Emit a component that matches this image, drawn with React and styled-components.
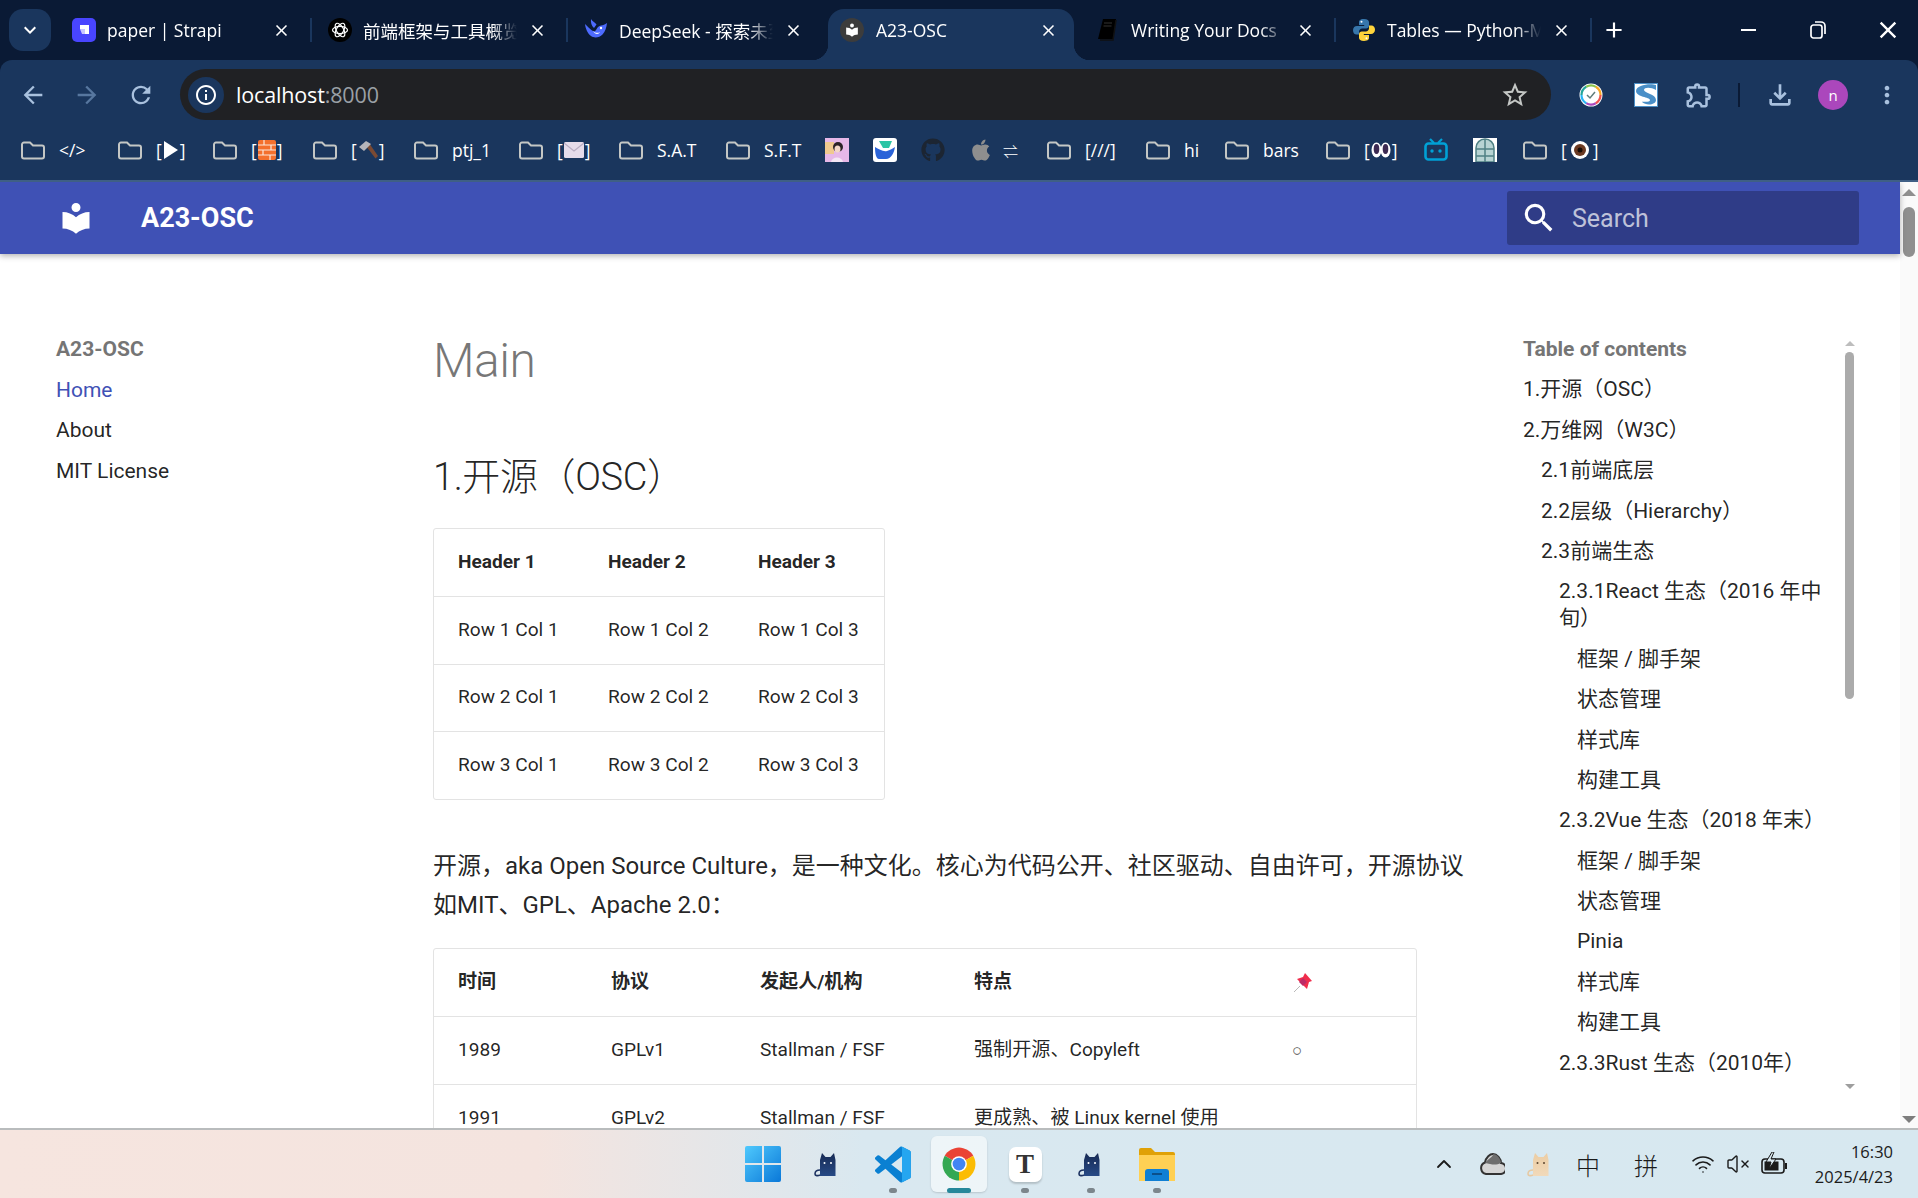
import React from 'react';
import styled, { createGlobalStyle } from 'styled-components';
import {
  MdArrowBack,
  MdArrowForward,
  MdRefresh,
  MdInfoOutline,
  MdStarBorder,
  MdOutlineExtension,
  MdOutlineFileDownload,
  MdMoreVert,
  MdClose,
  MdAdd,
  MdKeyboardArrowDown,
  MdSearch,
} from 'react-icons/md';
import { FaGithub, FaApple } from 'react-icons/fa';
import { ChevronUp, Wifi, VolumeX } from 'lucide-react';

const GlobalStyle = createGlobalStyle`
  html, body {
    margin: 0;
    width: 1918px;
    height: 1198px;
    overflow: hidden;
    background: #fff;
  }
`;

/* ---------- browser chrome ---------- */

const Shell = styled.div`
  width: 1918px;
  height: 1198px;
  display: flex;
  flex-direction: column;
  font-family: Roboto, 'Noto Sans CJK SC', sans-serif;
`;

const Chrome = styled.header`
  flex: none;
  background: #0a1a35;
  font-family: 'Open Sans', 'Noto Sans CJK SC', sans-serif;
  color: #fff;
`;

const TabStrip = styled.div`
  height: 60px;
  display: flex;
  align-items: flex-start;
  padding: 9px 0 0 9px;
  box-sizing: border-box;
`;

const CollapseButton = styled.div`
  width: 42px;
  height: 42px;
  margin-right: 5px;
  border-radius: 14px;
  background: #1a365d;
  display: flex;
  align-items: center;
  justify-content: center;
  font-size: 24px;
`;

const Tab = styled.div`
  position: relative;
  flex: none;
  box-sizing: border-box;
  width: ${(p) => p.$width || 254}px;
  height: ${(p) => (p.$active ? 51 : 42)}px;
  margin: 0 ${(p) => (p.$active ? 4 : 0)}px;
  padding: ${(p) => (p.$active ? '0 16px 9px 12px' : '0 19px 0 16px')};
  display: flex;
  align-items: center;
  gap: ${(p) => (p.$active ? 12 : 11)}px;
  font-size: 17.5px;
  background: ${(p) => (p.$active ? '#1a365d' : 'transparent')};
  border-radius: 16px 16px 0 0;

  ${(p) =>
    p.$active &&
    `
    &::before, &::after {
      content: '';
      position: absolute;
      bottom: 0;
      width: 16px;
      height: 16px;
    }
    &::before {
      left: -16px;
      background: radial-gradient(circle at 0 0, transparent 16px, #1a365d 16.5px);
    }
    &::after {
      right: -16px;
      background: radial-gradient(circle at 100% 0, transparent 16px, #1a365d 16.5px);
    }
  `}
`;

const TabTitle = styled.span`
  flex: 1;
  white-space: nowrap;
  overflow: hidden;
  mask-image: linear-gradient(to right, #000 84%, transparent 100%);
`;

const TabClose = styled.span`
  display: flex;
  font-size: 19px;
`;

const TabSeparator = styled.div`
  flex: none;
  width: 2px;
  height: 24px;
  margin-top: 9px;
  background: ${(p) => (p.$hidden ? 'transparent' : '#1a365d')};
`;

const NewTab = styled.div`
  width: 43px;
  height: 42px;
  display: flex;
  align-items: center;
  justify-content: center;
  font-size: 26px;
`;

const WindowButtons = styled.div`
  margin-left: auto;
  height: 42px;
  display: flex;
  align-items: center;
`;

const WindowButton = styled.div`
  width: ${(p) => p.$width}px;
  height: 42px;
  display: flex;
  align-items: center;
  justify-content: center;
  font-size: 28px;
`;

const Toolbar = styled.div`
  height: 60px;
  background: #1a365d;
  border-radius: 12px 12px 0 0;
  display: flex;
  align-items: flex-start;
  padding-top: 9px;
  box-sizing: border-box;
`;

const NavButton = styled.div`
  width: 54px;
  height: 51px;
  display: flex;
  align-items: center;
  justify-content: center;
  font-size: 28px;
  color: ${(p) => (p.$dim ? '#57779f' : '#a9c1de')};
`;

const NavGroup = styled.div`
  display: flex;
  padding-left: 6px;
  width: 180px;
  flex: none;
  box-sizing: border-box;
`;

const Omnibox = styled.div`
  width: 1371px;
  height: 51px;
  flex: none;
  background: #202124;
  border-radius: 26px;
  display: flex;
  align-items: center;
  padding-left: 8px;
  padding-right: 21px;
  box-sizing: border-box;
`;

const InfoBadge = styled.div`
  width: 36px;
  height: 36px;
  border-radius: 50%;
  background: #1a365d;
  display: flex;
  align-items: center;
  justify-content: center;
  font-size: 24px;
`;

const UrlHost = styled.span`
  margin-left: 12px;
  font-size: 21.5px;
  letter-spacing: -0.15px;
`;

const UrlPort = styled.span`
  color: #9aa0a6;
`;

const StarIcon = styled.div`
  margin-left: auto;
  display: flex;
  font-size: 30px;
  color: #c4c7c5;
`;

const ToolbarActions = styled.div`
  flex: 1;
  height: 51px;
  display: flex;
  align-items: center;
`;

const ActionSlot = styled.div`
  flex: none;
  width: ${(p) => p.$width}px;
  display: flex;
  align-items: center;
  justify-content: center;
  font-size: ${(p) => p.$size || 28}px;
  color: #a9c1de;
`;

const ToolbarDivider = styled.div`
  width: 2px;
  height: 24px;
  background: #0a1a35;
`;

const Avatar = styled.div`
  flex: none;
  width: 30px;
  height: 30px;
  border-radius: 50%;
  background: #ab47bc;
  color: #fff;
  font-size: 15px;
  display: flex;
  align-items: center;
  justify-content: center;
`;

const BookmarkBar = styled.div`
  height: 60px;
  background: #1a365d;
  border-bottom: 2px solid #3f5f85;
  display: flex;
  align-items: center;
  padding-left: 21px;
`;

const Bookmark = styled.div`
  flex: none;
  width: ${(p) => p.$width}px;
  display: flex;
  align-items: center;
  gap: ${(p) => p.$gap ?? 14}px;
  font-size: 17.5px;
  white-space: nowrap;
`;

const BracketLabel = styled.span`
  display: flex;
  align-items: center;
  gap: 1px;
`;

const AppleMark = styled(FaApple)`
  margin-left: -3px;
`;

const SwapArrows = styled.span`
  font-size: 15px;
  font-weight: 300;
`;

/* ---------- docs page ---------- */

const Viewport = styled.div`
  flex: 1;
  min-height: 0;
  display: flex;
  overflow: hidden;
`;

const Page = styled.div`
  flex: 1;
  min-width: 0;
  display: flex;
  flex-direction: column;
  background: #fff;
`;

const SiteHeader = styled.div`
  flex: none;
  position: relative;
  z-index: 1;
  height: 72px;
  background: #3f51b5;
  box-shadow: 0 2px 6px rgba(0, 0, 0, 0.3);
  display: flex;
  align-items: center;
  color: #fff;
  padding-left: 58px;
`;

const SiteTitle = styled.div`
  margin-left: 47px;
  font-size: 27px;
  font-weight: 700;
`;

const SearchBox = styled.div`
  margin-left: auto;
  margin-right: 41px;
  width: 352px;
  height: 54px;
  border-radius: 3px;
  background: #2f3c87;
  display: flex;
  align-items: center;
  padding-left: 13px;
  box-sizing: border-box;
  font-size: 25px;
  color: rgba(255, 255, 255, 0.7);
  gap: 14px;
`;

const SearchGlyph = styled.span`
  display: flex;
  font-size: 38px;
  color: #fff;
`;

const Columns = styled.div`
  flex: 1;
  min-height: 0;
  display: grid;
  grid-template-columns: 433px 1090px 1fr;
`;

const Sidebar = styled.nav`
  padding: 82px 0 0 56px;
  font-size: 21px;
`;

const NavTitle = styled.div`
  line-height: 27px;
  font-weight: 700;
  color: #757575;
`;

const NavLink = styled.div`
  line-height: 27px;
  margin-top: 13.5px;
  color: ${(p) => (p.$current ? '#3f51b5' : 'rgba(0, 0, 0, 0.87)')};
`;

const Article = styled.main`
  padding: 78px 45px 0 0;
  color: rgba(0, 0, 0, 0.87);
`;

const PageTitle = styled.h1`
  margin: 0;
  font-size: 48px;
  line-height: 58px;
  font-weight: 300;
  color: rgba(0, 0, 0, 0.54);
  letter-spacing: -0.5px;
`;

const SectionTitle = styled.h2`
  margin: 62px 0 26px;
  font-size: 38px;
  line-height: 50px;
  font-weight: 300;
  letter-spacing: -0.4px;
`;

const Prose = styled.p`
  margin: 47px 0 23px;
  font-size: 24px;
  line-height: 39.2px;
`;

const TableFrame = styled.div`
  width: fit-content;
  border: 1px solid #e3e3e3;
  border-radius: 3px;
  overflow: hidden;
`;

const DataTable = styled.table`
  border-collapse: collapse;
  table-layout: fixed;
  font-size: 19.1px;
  line-height: 24px;
`;

const Cell = styled.td`
  box-sizing: border-box;
  padding: 0 0 1px 24px;
  height: 67.5px;
  border-top: 1px solid #e3e3e3;
  text-align: left;
`;

const HeadCell = styled(Cell).attrs({ as: 'th' })`
  padding-bottom: 2px;
  font-weight: 700;
  border-top: 0;
`;

const Col = styled.col`
  width: ${(p) => p.$width}px;
`;

const Bullet = styled.span`
  margin-left: -3px;
  font-family: 'Liberation Sans', sans-serif;
  font-size: 17px;
  color: #555;
`;

const PinWrap = styled.span`
  display: inline-flex;
  vertical-align: middle;
  margin-left: -2px;
`;

const Toc = styled.aside`
  padding-top: 82px;
  display: flex;
  align-items: flex-start;
  font-size: 21px;
`;

const TocBody = styled.div`
  width: 303px;
  flex: none;
`;

const TocItem = styled.div`
  line-height: 27px;
  margin-top: 13.4px;
  padding-left: ${(p) => p.$level * 18}px;
  color: rgba(0, 0, 0, 0.87);
`;

const TocTrack = styled.div`
  margin-left: 19px;
  width: 9px;
  height: 748px;
  padding-top: 5px;
  display: flex;
  flex-direction: column;
  align-items: center;
`;

const TocThumb = styled.div`
  margin-top: 6px;
  width: 9px;
  height: 347px;
  border-radius: 5px;
  background: #ababab;
`;

const Arrow = styled.div`
  width: 0;
  height: 0;
  border-left: ${(p) => p.$size}px solid transparent;
  border-right: ${(p) => p.$size}px solid transparent;
  ${(p) => (p.$down ? 'border-top' : 'border-bottom')}: ${(p) => p.$size}px solid ${(p) => p.$color};
  margin-top: ${(p) => (p.$down ? 'auto' : '0')};
`;

const PageScrollbar = styled.div`
  flex: none;
  width: 18px;
  background: #fafafa;
  box-sizing: border-box;
  padding: 7px 0 5px;
  display: flex;
  flex-direction: column;
  align-items: center;
`;

const PageThumb = styled.div`
  margin-top: 11px;
  width: 12px;
  height: 50px;
  border-radius: 6px;
  background: #8f8f8f;
`;

/* ---------- taskbar ---------- */

const Taskbar = styled.footer`
  flex: none;
  height: 70px;
  box-sizing: border-box;
  border-top: 2px solid #b9bcbd;
  background: linear-gradient(90deg, #f6e5df 0%, #f4e4df 28%, #d9e8f0 45%, #d7e8f0 100%);
  display: flex;
  align-items: stretch;
  padding-left: 731px;
  font-family: 'Open Sans', 'Noto Sans CJK SC', sans-serif;
  color: #1b1b1b;
`;

const Launcher = styled.div`
  display: flex;
`;

const LauncherSlot = styled.div`
  position: relative;
  width: ${(p) => p.$width || 66}px;
  display: flex;
  align-items: center;
  justify-content: center;
  box-sizing: border-box;

  ${(p) =>
    p.$open &&
    `
    &::after {
      content: '';
      position: absolute;
      bottom: 5px;
      left: 50%;
      margin-left: -${p.$focused ? 12 : 4}px;
      width: ${p.$focused ? 24 : 8}px;
      height: 5px;
      border-radius: 3px;
      background: ${p.$focused ? '#25879a' : '#7c868c'};
    }
  `}
`;

const FocusPlate = styled.div`
  width: 56px;
  height: 56px;
  border-radius: 6px;
  background: rgba(255, 255, 255, 0.55);
  box-shadow: 0 1px 2px rgba(0, 0, 0, 0.15);
  display: flex;
  align-items: center;
  justify-content: center;
`;

const TyporaIcon = styled.div`
  width: 33px;
  height: 35px;
  border-radius: 7px;
  background: #fff;
  box-shadow: 0 2px 2px rgba(0, 0, 0, 0.18);
  display: flex;
  align-items: center;
  justify-content: center;
  font-family: 'Liberation Serif', serif;
  font-weight: 700;
  font-size: 27px;
  color: #333;
`;

const Tray = styled.div`
  margin-left: auto;
  margin-right: 25px;
  display: flex;
  align-items: center;
`;

const TraySlot = styled.div`
  width: ${(p) => p.$width}px;
  display: flex;
  align-items: center;
  justify-content: center;
  font-size: 24px;
  font-family: 'Noto Sans CJK SC', sans-serif;
  font-weight: 300;
`;

const Clock = styled.div`
  width: 95px;
  text-align: right;
  font-size: 16.5px;
  line-height: 25px;
`;

/* ---------- small drawings ---------- */

const Icon = ({ w = 24, h = 24, vb, children }) => (
  <svg width={w} height={h} viewBox={vb || `0 0 ${w} ${h}`}>
    {children}
  </svg>
);

const FolderIcon = () => (
  <Icon w={24} h={19}>
    <path
      d="M3 1.5h6l3 3h9a2 2 0 0 1 2 2v9a2 2 0 0 1-2 2H3a2 2 0 0 1-2-2v-12a2 2 0 0 1 2-2z"
      fill="none"
      stroke="#c4c7c5"
      strokeWidth="2"
    />
  </Icon>
);

const LIBRARY =
  'M12 8a3 3 0 0 0 3-3 3 3 0 0 0-3-3 3 3 0 0 0-3 3 3 3 0 0 0 3 3m0 3.54C9.64 9.35 6.5 8 3 8v11c3.5 0 6.64 1.35 9 3.54 2.36-2.19 5.5-3.54 9-3.54V8c-3.5 0-6.64 1.35-9 3.54Z';

const StrapiFav = () => (
  <Icon>
    <rect width="24" height="24" rx="5" fill="#4945ff" />
    <path d="M8 7h9v9h-4v-5H8z" fill="#fff" />
    <path d="M8 11h5v5H10z" fill="#c8c6ff" />
  </Icon>
);

const ChatFav = () => (
  <Icon>
    <circle cx="12" cy="12" r="12" fill="#000" />
    <g fill="none" stroke="#fff" strokeWidth="1.2">
      <ellipse cx="12" cy="12" rx="7.5" ry="3.6" />
      <ellipse cx="12" cy="12" rx="7.5" ry="3.6" transform="rotate(60 12 12)" />
      <ellipse cx="12" cy="12" rx="7.5" ry="3.6" transform="rotate(120 12 12)" />
    </g>
  </Icon>
);

const DeepSeekFav = () => (
  <Icon>
    <path
      d="M1 6c2.500 2.500 4.500 4.800 7 6.500 2 1.300 3.500.8 4.500-1.300C13.500 9 15 7.800 17 7.500c2-.3 4-.8 6-2.500-.6 4.500-1.500 8.500-4.500 11.500-3 3-8 4-11.500 1.500C3.500 15.500 1.500 10.500 1 6z"
      fill="#4d6bfe"
    />
    <path d="M7 1c1 2.500 4 3 5.500 5.500L10 10C7.500 8 6.500 4.500 7 1z" fill="#4d6bfe" />
    <path d="M9 13c2 2 5 2.500 7 1-1 2.500-5 3-7-1z" fill="#fff" />
    <circle cx="17" cy="10" r="1.200" fill="#fff" />
  </Icon>
);

const OscFav = () => (
  <Icon>
    <circle cx="12" cy="12" r="12" fill="#3c3c3c" />
    <g transform="translate(4.200 4.200) scale(.65)">
      <path d={LIBRARY} fill="#fff" />
    </g>
  </Icon>
);

const BookFav = () => (
  <Icon>
    <path d="M7 1h13l-3 20H2z" fill="#000" />
    <path d="M8 5h8M7.500 8h8" stroke="#333" strokeWidth="1" />
    <path d="M4 22h13l3-20" fill="none" stroke="#111" strokeWidth="1.500" />
  </Icon>
);

const PYTHON_HALF =
  'M12 1c-4.500 0-5 2-5 3.200V7h5.200v1H5c-2.200 0-4 1.500-4 4.200s1.500 4.300 3.500 4.300H7v-2.800c0-1.800 1.500-3.200 3.200-3.200h4c1.500 0 2.800-1.200 2.800-2.800V4.200C17 2.500 15.500 1 12 1z';

const PythonFav = () => (
  <Icon>
    <path d={PYTHON_HALF} fill="#3776ab" />
    <path d={PYTHON_HALF} fill="#ffd43b" transform="rotate(180 12 12)" />
    <circle cx="9.500" cy="3.800" r="1" fill="#fff" />
    <circle cx="14.500" cy="20.200" r="1" fill="#fff" />
  </Icon>
);

const PlayGlyph = () => (
  <Icon w={16} h={20}>
    <path d="M1 1l14 9-14 9z" fill="#fff" />
  </Icon>
);

const BrickGlyph = () => (
  <Icon w={18} h={20}>
    <rect width="18" height="20" rx="2" fill="#f4702d" />
    <path d="M0 5h18M0 10h18M0 15h18M6 0v5M13 5v5M5 10v5M12 15v5" stroke="#fbe6da" strokeWidth="1.200" />
  </Icon>
);

const HammerGlyph = () => (
  <Icon w={20} h={20}>
    <path d="M8 6l3-3 9 13-2.500 2.500z" fill="#7a4a33" />
    <path d="M1 7l7-6 5 3-7 7z" fill="#b5b5ba" />
  </Icon>
);

const MailGlyph = () => (
  <Icon w={20} h={16}>
    <rect width="20" height="16" rx="1.500" fill="#e6dcea" />
    <path d="M0 1l10 8 10-8" fill="none" stroke="#b9adc2" strokeWidth="1.200" />
  </Icon>
);

const EyesGlyph = () => (
  <Icon w={20} h={20}>
    <ellipse cx="5.500" cy="10" rx="5" ry="7.500" fill="#fff" />
    <ellipse cx="14.500" cy="10" rx="5" ry="7.500" fill="#fff" />
    <ellipse cx="5.500" cy="9" rx="2.800" ry="5" fill="#3d2a52" />
    <ellipse cx="14.500" cy="9" rx="2.800" ry="5" fill="#3d2a52" />
  </Icon>
);

const EyeGlyph = () => (
  <Icon>
    <circle cx="12" cy="12" r="9" fill="#fff" />
    <circle cx="12" cy="12" r="6" fill="#6b3a22" />
    <circle cx="12" cy="12" r="2.500" fill="#1a0d06" />
  </Icon>
);

const PortraitFav = () => (
  <Icon>
    <rect width="24" height="24" fill="#e6b8e8" />
    <rect width="9" height="12" y="4" fill="#efc98f" />
    <path d="M6 24c1-6 11-6 12 0z" fill="#f4e6f5" />
    <circle cx="13" cy="9" r="5" fill="#2b2226" />
    <ellipse cx="12.500" cy="11" rx="3" ry="3.500" fill="#f3d7c8" />
  </Icon>
);

const WingFav = () => (
  <Icon>
    <rect width="24" height="24" rx="3" fill="#fff" />
    <path d="M6 3h13l-3 7h-6z" fill="#2cc5a5" />
    <path d="M2 9c4 2 8 5 12 4s6-3 8-4c-1 6-4 12-9 12H6C3 21 2 15 2 9z" fill="#2a63d8" />
  </Icon>
);

const BiliFav = () => (
  <Icon>
    <path d="M6 1l4 4M18 1l-4 4" stroke="#00a1d6" strokeWidth="2.200" />
    <rect x="1.500" y="5.500" width="21" height="16" rx="3" fill="none" stroke="#00a1d6" strokeWidth="2.600" />
    <circle cx="8" cy="13" r="1.700" fill="#00a1d6" />
    <circle cx="16" cy="13" r="1.700" fill="#00a1d6" />
  </Icon>
);

const WindowFav = () => (
  <Icon>
    <rect width="24" height="24" fill="#fff" />
    <path d="M3 24V10a9 9 0 0 1 18 0v14z" fill="#b7d3d3" stroke="#4f8084" strokeWidth="1.500" />
    <path d="M12 1v23M3 11h18M3 18h18" stroke="#4f8084" strokeWidth="1.500" />
  </Icon>
);

const ClockExt = () => (
  <Icon vb="0 0 24 24">
    <circle cx="12" cy="12" r="11.500" fill="#fff" />
    <g fill="none" strokeWidth="2.200">
      {['#f9a825', '#ef5350', '#ab47bc', '#29b6f6', '#26a69a', '#8bc34a'].map((c, i) => (
        <circle
          key={c}
          cx="12"
          cy="12"
          r="9.500"
          stroke={c}
          strokeDasharray="10 50"
          transform={`rotate(${i * 60 - 60} 12 12)`}
        />
      ))}
    </g>
    <path d="M8 12l3 3 5-6" fill="none" stroke="#607d7b" strokeWidth="1.500" />
  </Icon>
);

const SExt = () => (
  <Icon>
    <rect width="24" height="24" fill="#4a8fc7" />
    <rect x="1" y="1" width="22" height="22" fill="#fff" />
    <path d="M22 2v5C17 4 10 4 10 7s12 4 12 10c0 5-10 6-14 2-1-1 8 1 8-2s-14-3-14-9C2 2 16 0 22 2z" fill="#4a8fc7" />
  </Icon>
);

const RestoreIcon = () => (
  <Icon w={16} h={18}>
    <rect x="1" y="4" width="11" height="13" rx="2.500" fill="none" stroke="#fff" strokeWidth="1.700" />
    <path d="M5 1h6a4 4 0 0 1 4 4v8" fill="none" stroke="#fff" strokeWidth="1.700" />
  </Icon>
);

const MinimizeIcon = () => (
  <Icon w={15} h={4}>
    <rect width="15" height="2" y="1" fill="#fff" />
  </Icon>
);

const PinGlyph = () => (
  <Icon w={19} h={20}>
    <path d="M1 19l6-6" stroke="#b9b9b9" strokeWidth="1" />
    <path d="M12 0l7 8-3 1-2 7-10-10 6-2z" fill="#f02d4c" />
    <path d="M10 5l4 4-4 4-4-4z" fill="#bd2a66" />
  </Icon>
);

const WinLogo = () => (
  <Icon w={36} h={36}>
    <defs>
      <linearGradient id="wl" x1="0" y1="0" x2="1" y2="1">
        <stop offset="0" stopColor="#4fc9fd" />
        <stop offset="1" stopColor="#0a78d8" />
      </linearGradient>
    </defs>
    <path d="M2 0h15v17H0V2a2 2 0 0 1 2-2zM19 0h15a2 2 0 0 1 2 2v15H19zM0 19h17v17H2a2 2 0 0 1-2-2zM19 19h17v15a2 2 0 0 1-2 2H19z" fill="url(#wl)" />
  </Icon>
);

const CAT_BODY = 'M8 1l3.500 4h5L20 1l1.500 7v16H6V8z';

const CatIcon = ({ light }) => (
  <Icon w={26} h={25}>
    <defs>
      <linearGradient id={light ? 'ct2' : 'ct1'} x1="0" y1="0" x2="0" y2="1">
        <stop offset="0" stopColor={light ? '#eccda3' : '#172a54'} />
        <stop offset="1" stopColor={light ? '#f1d9ba' : '#274a86'} />
      </linearGradient>
    </defs>
    <path d="M6 18c-3 0-5 1-5 4 0 2 3 2 5 1" fill="none" stroke={light ? '#e6c9a3' : '#1d3261'} strokeWidth="1.600" />
    <path d={CAT_BODY} fill={`url(#${light ? 'ct2' : 'ct1'})`} />
    <circle cx="10.500" cy="11" r="1" fill={light ? '#5c4630' : '#fff'} />
    <circle cx="17" cy="11" r="1" fill={light ? '#5c4630' : '#fff'} />
  </Icon>
);

const VsCode = () => (
  <Icon w={36} h={37} vb="0 0 100 100">
    <path
      d="M96 10.800 75.400 1a6 6 0 0 0-7 1.200L29 38.100 11.900 25.100a4 4 0 0 0-5.200.2l-5.400 4.900a4 4 0 0 0 0 6L16 50 1.300 63.800a4 4 0 0 0 0 6l5.400 4.900a4 4 0 0 0 5.200.2L29 61.900l39.400 35.900a6 6 0 0 0 7 1.200L96 89.200a6 6 0 0 0 3.400-5.400V16.200a6 6 0 0 0-3.400-5.400zM75 72.700 45.100 50 75 27.300z"
      fill="#0a80d2"
    />
    <path
      d="M71 1.200a6 6 0 0 1 4.400-.2L96 10.800a6 6 0 0 1 3.400 5.400v67.600a6 6 0 0 1-3.400 5.400L75.400 99a6 6 0 0 1-4.400-.2c2.500 1.200 4-.8 4-3.800V5c0-3-1.500-5-4-3.800z"
      fill="#25a6f0"
    />
  </Icon>
);

const ChromeLogo = () => (
  <Icon w={36} h={36} vb="0 0 48 48">
    <path d="M24 24 5 13a22 22 0 0 1 38 0z" fill="#ea4335" />
    <path d="M24 24 43 13a22 22 0 0 1-19 33z" fill="#fbbc04" />
    <path d="M24 24v22A22 22 0 0 1 5 13z" fill="#34a853" />
    <circle cx="24" cy="24" r="10.500" fill="#fff" />
    <circle cx="24" cy="24" r="8.500" fill="#4285f4" />
  </Icon>
);

const ExplorerIcon = () => (
  <Icon w={36} h={33}>
    <path d="M0 2a2 2 0 0 1 2-2h10l4 4h18a2 2 0 0 1 2 2v6H0z" fill="#e0a106" />
    <path d="M0 7h36v26H0z" fill="#ffd054" />
    <path d="M6 33V24a3 3 0 0 1 3-3h18a3 3 0 0 1 3 3v9z" fill="#0f7fd4" />
    <path d="M13 26h10" stroke="#0b4f8a" strokeWidth="2" />
  </Icon>
);

const CloudIcon = () => (
  <Icon w={26} h={22}>
    <path d="M7 21a6 6 0 0 1-1-11.500C7 4 11 1 14 1c4 0 8 5 8 9a5.500 5.500 0 0 1-1 11z" fill="#d5d5d5" stroke="#333" strokeWidth="2" />
    <path d="M6 10c4-5 9-7 8-9 4 0 8 5 8 9-6 3-10 1-16 0z" fill="#6e6e6e" />
  </Icon>
);

const BatteryIcon = () => (
  <Icon w={28} h={24}>
    <rect x="2" y="7" width="22" height="14" rx="3" fill="none" stroke="#1b1b1b" strokeWidth="1.600" />
    <rect x="4.500" y="9.500" width="14" height="9" fill="#1b1b1b" />
    <rect x="25" y="11" width="2" height="6" fill="#1b1b1b" />
    <path d="M12 0 6 10h5l-2 7 7-10h-5l3-7z" fill="#d9e8f0" stroke="#1b1b1b" strokeWidth="1" />
  </Icon>
);

/* ---------- data ---------- */

const TABS = [
  { title: 'paper | Strapi', icon: <StrapiFav /> },
  { title: '前端框架与工具概览与选型', icon: <ChatFav /> },
  { title: 'DeepSeek - 探索未至之境', icon: <DeepSeekFav />, noSep: true },
  { title: 'A23-OSC', icon: <OscFav />, active: true, noSep: true },
  { title: 'Writing Your Docs', icon: <BookFav /> },
  { title: 'Tables — Python-Markdown', icon: <PythonFav /> },
];

const BOOKMARKS = [
  { w: 97, folder: true, label: '</>' },
  { w: 95, folder: true, label: <BracketLabel>[<PlayGlyph />]</BracketLabel> },
  { w: 100, folder: true, label: <BracketLabel>[<BrickGlyph />]</BracketLabel> },
  { w: 101, folder: true, label: <BracketLabel>[<HammerGlyph />]</BracketLabel> },
  { w: 105, folder: true, label: 'ptj_1' },
  { w: 100, folder: true, label: <BracketLabel>[<MailGlyph />]</BracketLabel> },
  { w: 107, folder: true, label: 'S.A.T' },
  { w: 99, folder: true, label: 'S.F.T' },
  { w: 48, label: <PortraitFav /> },
  { w: 48, label: <WingFav /> },
  { w: 51, label: <FaGithub size={24} color="#1c2532" /> },
  { w: 75, gap: 10, label: <AppleMark size={24} color="#8e8e8e" />, extra: <SwapArrows>⇌</SwapArrows> },
  { w: 99, folder: true, label: '[///]' },
  { w: 79, folder: true, label: 'hi' },
  { w: 101, folder: true, label: 'bars' },
  { w: 98, folder: true, label: <BracketLabel>[<EyesGlyph />]</BracketLabel> },
  { w: 49, label: <BiliFav /> },
  { w: 50, label: <WindowFav /> },
  { w: 100, folder: true, label: <BracketLabel>[ <EyeGlyph /> ]</BracketLabel> },
];

const TOC = [
  [0, '1.开源（OSC）'],
  [0, '2.万维网（W3C）'],
  [1, '2.1前端底层'],
  [1, '2.2层级（Hierarchy）'],
  [1, '2.3前端生态'],
  [2, '2.3.1React 生态（2016 年中旬）'],
  [3, '框架 / 脚手架'],
  [3, '状态管理'],
  [3, '样式库'],
  [3, '构建工具'],
  [2, '2.3.2Vue 生态（2018 年末）'],
  [3, '框架 / 脚手架'],
  [3, '状态管理'],
  [3, 'Pinia'],
  [3, '样式库'],
  [3, '构建工具'],
  [2, '2.3.3Rust 生态（2010年）'],
];

const ROWS = [1, 2, 3];

const App = () => (
  <Shell>
    <GlobalStyle />
    <Chrome>
      <TabStrip>
        <CollapseButton>
          <MdKeyboardArrowDown />
        </CollapseButton>
        {TABS.map((t) => (
          <React.Fragment key={t.title}>
            <Tab $active={t.active} $width={t.active ? 246 : undefined}>
              {t.icon}
              <TabTitle>{t.title}</TabTitle>
              <TabClose>
                <MdClose />
              </TabClose>
            </Tab>
            <TabSeparator $hidden={t.noSep} />
          </React.Fragment>
        ))}
        <NewTab>
          <MdAdd />
        </NewTab>
        <WindowButtons>
          <WindowButton $width={60}>
            <MinimizeIcon />
          </WindowButton>
          <WindowButton $width={80}>
            <RestoreIcon />
          </WindowButton>
          <WindowButton $width={60}>
            <MdClose />
          </WindowButton>
        </WindowButtons>
      </TabStrip>
      <Toolbar>
        <NavGroup>
          <NavButton>
            <MdArrowBack />
          </NavButton>
          <NavButton $dim>
            <MdArrowForward />
          </NavButton>
          <NavButton>
            <MdRefresh />
          </NavButton>
        </NavGroup>
        <Omnibox>
          <InfoBadge>
            <MdInfoOutline />
          </InfoBadge>
          <UrlHost>
            localhost<UrlPort>:8000</UrlPort>
          </UrlHost>
          <StarIcon>
            <MdStarBorder />
          </StarIcon>
        </Omnibox>
        <ToolbarActions>
          <ActionSlot $width={80}>
            <ClockExt />
          </ActionSlot>
          <ActionSlot $width={29}>
            <SExt />
          </ActionSlot>
          <ActionSlot $width={78} $size={30}>
            <MdOutlineExtension />
          </ActionSlot>
          <ToolbarDivider />
          <ActionSlot $width={80} $size={32}>
            <MdOutlineFileDownload />
          </ActionSlot>
          <ActionSlot $width={26}>
            <Avatar>n</Avatar>
          </ActionSlot>
          <ActionSlot $width={82} $size={28}>
            <MdMoreVert />
          </ActionSlot>
        </ToolbarActions>
      </Toolbar>
      <BookmarkBar>
        {BOOKMARKS.map((b, i) => (
          <Bookmark key={i} $width={b.w} $gap={b.gap}>
            {b.folder && <FolderIcon />}
            {b.label}
            {b.extra}
          </Bookmark>
        ))}
      </BookmarkBar>
    </Chrome>

    <Viewport>
      <Page>
        <SiteHeader>
          <Icon w={36} h={36} vb="0 0 24 24">
            <path d={LIBRARY} fill="#fff" />
          </Icon>
          <SiteTitle>A23-OSC</SiteTitle>
          <SearchBox>
            <SearchGlyph>
              <MdSearch />
            </SearchGlyph>
            Search
          </SearchBox>
        </SiteHeader>
        <Columns>
          <Sidebar>
            <NavTitle>A23-OSC</NavTitle>
            <NavLink $current>Home</NavLink>
            <NavLink>About</NavLink>
            <NavLink>MIT License</NavLink>
          </Sidebar>
          <Article>
            <PageTitle>Main</PageTitle>
            <SectionTitle>1.开源（OSC）</SectionTitle>
            <TableFrame>
              <DataTable>
                <colgroup>
                  <Col $width={150} />
                  <Col $width={150} />
                  <Col $width={150} />
                </colgroup>
                <thead>
                  <tr>
                    <HeadCell>Header 1</HeadCell>
                    <HeadCell>Header 2</HeadCell>
                    <HeadCell>Header 3</HeadCell>
                  </tr>
                </thead>
                <tbody>
                  {ROWS.map((r) => (
                    <tr key={r}>
                      <Cell>Row {r} Col 1</Cell>
                      <Cell>Row {r} Col 2</Cell>
                      <Cell>Row {r} Col 3</Cell>
                    </tr>
                  ))}
                </tbody>
              </DataTable>
            </TableFrame>
            <Prose>
              开源，aka Open Source Culture，是一种文化。核心为代码公开、社区驱动、自由许可，开源协议如MIT、GPL、Apache 2.0：
            </Prose>
            <TableFrame>
              <DataTable>
                <colgroup>
                  <Col $width={153} />
                  <Col $width={149} />
                  <Col $width={214} />
                  <Col $width={321} />
                  <Col $width={145} />
                </colgroup>
                <thead>
                  <tr>
                    <HeadCell>时间</HeadCell>
                    <HeadCell>协议</HeadCell>
                    <HeadCell>发起人/机构</HeadCell>
                    <HeadCell>特点</HeadCell>
                    <HeadCell>
                      <PinWrap>
                        <PinGlyph />
                      </PinWrap>
                    </HeadCell>
                  </tr>
                </thead>
                <tbody>
                  <tr>
                    <Cell>1989</Cell>
                    <Cell>GPLv1</Cell>
                    <Cell>Stallman / FSF</Cell>
                    <Cell>强制开源、Copyleft</Cell>
                    <Cell>
                      <Bullet>○</Bullet>
                    </Cell>
                  </tr>
                  <tr>
                    <Cell>1991</Cell>
                    <Cell>GPLv2</Cell>
                    <Cell>Stallman / FSF</Cell>
                    <Cell>更成熟、被 Linux kernel 使用</Cell>
                    <Cell />
                  </tr>
                </tbody>
              </DataTable>
            </TableFrame>
          </Article>
          <Toc>
            <TocBody>
              <NavTitle>Table of contents</NavTitle>
              {TOC.map(([level, text], i) => (
                <TocItem key={i} $level={level}>
                  {text}
                </TocItem>
              ))}
            </TocBody>
            <TocTrack>
              <Arrow $size={5} $color="#bdbdbd" />
              <TocThumb />
              <Arrow $size={5} $color="#9e9e9e" $down />
            </TocTrack>
          </Toc>
        </Columns>
      </Page>
      <PageScrollbar>
        <Arrow $size={7} $color="#8f8f8f" />
        <PageThumb />
        <Arrow $size={7} $color="#7d7d7d" $down />
      </PageScrollbar>
    </Viewport>

    <Taskbar>
      <Launcher>
        <LauncherSlot $width={63}>
          <WinLogo />
        </LauncherSlot>
        <LauncherSlot>
          <CatIcon />
        </LauncherSlot>
        <LauncherSlot $open>
          <VsCode />
        </LauncherSlot>
        <LauncherSlot $open $focused>
          <FocusPlate>
            <ChromeLogo />
          </FocusPlate>
        </LauncherSlot>
        <LauncherSlot $open>
          <TyporaIcon>T</TyporaIcon>
        </LauncherSlot>
        <LauncherSlot $open>
          <CatIcon />
        </LauncherSlot>
        <LauncherSlot $open>
          <ExplorerIcon />
        </LauncherSlot>
      </Launcher>
      <Tray>
        <TraySlot $width={48}>
          <ChevronUp size={24} strokeWidth={1.8} />
        </TraySlot>
        <TraySlot $width={48}>
          <CloudIcon />
        </TraySlot>
        <TraySlot $width={48}>
          <CatIcon light />
        </TraySlot>
        <TraySlot $width={48}>中</TraySlot>
        <TraySlot $width={68}>拼</TraySlot>
        <TraySlot $width={46}>
          <Wifi size={24} strokeWidth={1.6} />
        </TraySlot>
        <TraySlot $width={24}>
          <VolumeX size={24} strokeWidth={1.4} />
        </TraySlot>
        <TraySlot $width={48}>
          <BatteryIcon />
        </TraySlot>
        <Clock>
          16:30
          <br />
          2025/4/23
        </Clock>
      </Tray>
    </Taskbar>
  </Shell>
);

export default App;
